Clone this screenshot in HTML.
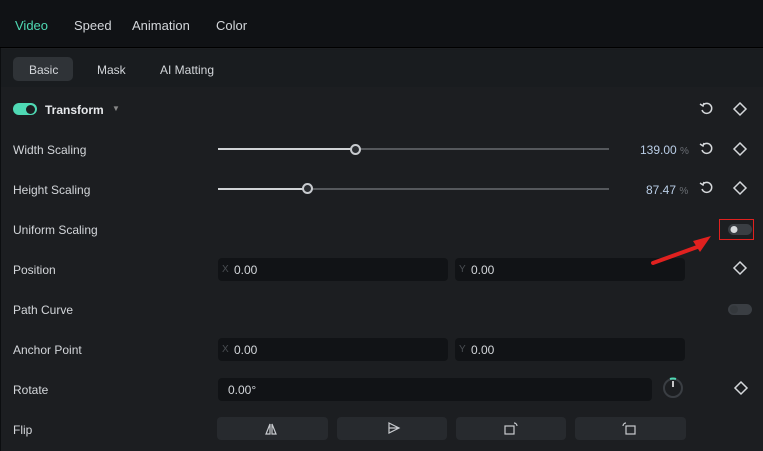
<!DOCTYPE html>
<html><head><style>
*{margin:0;padding:0;box-sizing:border-box}
body{width:763px;height:451px;background:#1c1e21;font-family:"Liberation Sans",sans-serif;font-size:12px;color:#d3d6da;position:relative;overflow:hidden}
.a{position:absolute}
.top{left:0;top:0;width:763px;height:48px;background:#101215;border-bottom:1px solid #000}
.lbl{left:13px;line-height:14px}
.inp{background:#111316;border-radius:4px;height:23px}
.inp span{position:absolute;top:5px;font-size:12px}
.btn{background:#272a2e;border-radius:4px;height:23px;top:417px}
.tr{left:218px;height:2px;background:#55585c}
.knob{width:11px;height:11px;border:2px solid #c8cbcf;border-radius:50%;background:#2a2d31}
</style></head><body>
<div class="a" style="left:0;top:0;width:1px;height:451px;background:#0c0e10"></div>
<div class="a top"></div>
<div class="a" style="left:15px;top:18px;color:#4fd9b4;font-size:13px">Video</div>
<div class="a" style="left:74px;top:18px;font-size:13px">Speed</div>
<div class="a" style="left:132px;top:18px;font-size:13px">Animation</div>
<div class="a" style="left:216px;top:18px;font-size:13px">Color</div>
<div class="a" style="left:1px;top:49px;width:762px;height:38px;background:#191c1f"></div>
<div class="a" style="left:13px;top:57px;width:60px;height:24px;background:#2f3337;border-radius:5px"></div>
<div class="a" style="left:29px;top:63px">Basic</div>
<div class="a" style="left:97px;top:63px">Mask</div>
<div class="a" style="left:160px;top:63px">AI Matting</div>

<div class="a" style="left:13px;top:103px;width:24px;height:12px;border-radius:6px;background:#4fd9b4"></div>
<div class="a" style="left:26px;top:105px;width:9px;height:9px;border-radius:50%;background:#1c1e21"></div>
<div class="a" style="left:45px;top:103px;font-weight:bold;color:#e6e8eb">Transform</div>
<div class="a" style="left:112px;top:104px;font-size:8px;color:#888">▼</div>

<div class="a lbl" style="top:143px">Width Scaling</div>
<div class="a lbl" style="top:183px">Height Scaling</div>
<div class="a lbl" style="top:223px">Uniform Scaling</div>
<div class="a lbl" style="top:263px">Position</div>
<div class="a lbl" style="top:303px">Path Curve</div>
<div class="a lbl" style="top:343px">Anchor Point</div>
<div class="a lbl" style="top:383px">Rotate</div>
<div class="a lbl" style="top:423px">Flip</div>

<div class="a tr" style="top:148px;width:391px"></div>
<div class="a" style="left:218px;top:148px;width:137px;height:2px;background:#d0d3d6"></div>
<div class="a knob" style="left:350px;top:144px"></div>
<div class="a tr" style="top:188px;width:391px"></div>
<div class="a" style="left:218px;top:188px;width:90px;height:2px;background:#d0d3d6"></div>
<div class="a knob" style="left:302px;top:183px"></div>
<div class="a" style="left:640px;top:143px;color:#b9cde6">139.00 <span style="color:#6a6e74;font-size:10px">%</span></div>
<div class="a" style="left:646px;top:183px;color:#b9cde6">87.47 <span style="color:#6a6e74;font-size:10px">%</span></div>

<div class="a inp" style="left:218px;top:258px;width:230px"><span style="left:4px;color:#4a4e53;font-size:10px;top:6px">X</span><span style="left:16px">0.00</span></div>
<div class="a inp" style="left:455px;top:258px;width:230px"><span style="left:4px;color:#4a4e53;font-size:10px;top:6px">Y</span><span style="left:16px">0.00</span></div>
<div class="a inp" style="left:218px;top:338px;width:230px"><span style="left:4px;color:#4a4e53;font-size:10px;top:6px">X</span><span style="left:16px">0.00</span></div>
<div class="a inp" style="left:455px;top:338px;width:230px"><span style="left:4px;color:#4a4e53;font-size:10px;top:6px">Y</span><span style="left:16px">0.00</span></div>
<div class="a inp" style="left:218px;top:378px;width:434px"><span style="left:10px">0.00°</span></div>

<div class="a btn" style="left:217px;width:111px"></div>
<div class="a btn" style="left:337px;width:110px"></div>
<div class="a btn" style="left:456px;width:110px"></div>
<div class="a btn" style="left:575px;width:111px"></div>

<div class="a" style="left:719px;top:219px;width:35px;height:21px;border:1px solid #e0211f"></div>
<svg class="a" style="left:0;top:0" width="763" height="451">
<g fill="none" stroke="#d5d8db" stroke-width="1.5">
<path d="M703 105 a5 5 0 1 1 -1 5 M700 104 l3 2 l1 -3"/>
<path d="M703 145 a5 5 0 1 1 -1 5 M700 144 l3 2 l1 -3"/>
<path d="M703 184 a5 5 0 1 1 -1 5 M700 183 l3 2 l1 -3"/>
<path d="M740 103 l6 6 l-6 6 l-6 -6z"/>
<path d="M740 143 l6 6 l-6 6 l-6 -6z"/>
<path d="M740 182 l6 6 l-6 6 l-6 -6z"/>
<path d="M740 262 l6 6 l-6 6 l-6 -6z"/>
<path d="M741 382 l6 6 l-6 6 l-6 -6z"/>
</g>
<rect x="728" y="224" width="24" height="11" rx="5.5" fill="#3a3e43"/>
<circle cx="734" cy="229.5" r="3.5" fill="#d8dadd"/>
<rect x="728" y="304" width="24" height="11" rx="5.5" fill="#3a3e43"/>
<circle cx="734" cy="309.5" r="4" fill="#34383c"/>
<path d="M653 263 L700 246" stroke="#e0211f" stroke-width="4" stroke-linecap="round"/>
<path d="M711 236 L693 241 L700 252z" fill="#e0211f"/>
<circle cx="673" cy="388" r="9" fill="none" stroke="#3a3e43" stroke-width="2"/>
<path d="M670 379 a9 9 0 0 1 6 0" stroke="#4fd9b4" stroke-width="2" fill="none"/>
<path d="M673 381 v6" stroke="#fff" stroke-width="1.5"/>
<g fill="none" stroke="#c8cbcf" stroke-width="1.2">
<path d="M270 424 l-4 10 h4z M272 424 l4 10 h-4z"/>
<path d="M389 423 l10 5 l-10 5z M389 428 h10"/>
<rect x="505" y="426" width="9" height="8"/><path d="M514 423 a3 3 0 0 1 3 3"/>
<rect x="626" y="426" width="9" height="8"/><path d="M626 423 a3 3 0 0 0 -3 3"/>
</g>
</svg>
</body></html>
